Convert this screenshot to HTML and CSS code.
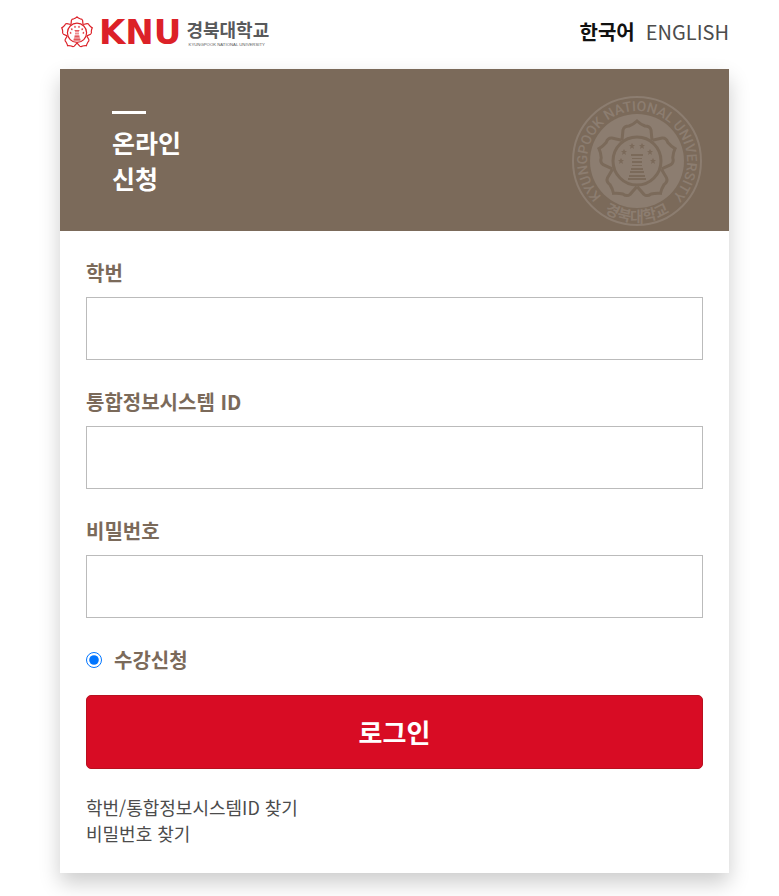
FILE: index.html
```html
<!DOCTYPE html>
<html lang="ko">
<head>
  <meta charset="UTF-8">
  <meta name="viewport" content="width=device-width, initial-scale=1">
  <title>경북대학교 온라인 신청</title>
  <link rel="stylesheet" href="styles.css">
</head>
<body>
  <svg class="defs" width="0" height="0" aria-hidden="true">
    <defs>
      <g id="petals">
        <path id="petal" d="M-15 -21L-14 -31Q-13 -35 -8 -35Q-3 -37 0 -40Q3 -37 8 -35Q13 -35 14 -31L15 -21"/>
        <use href="#petal" transform="rotate(72)"/>
        <use href="#petal" transform="rotate(144)"/>
        <use href="#petal" transform="rotate(216)"/>
        <use href="#petal" transform="rotate(288)"/>
        <circle r="24"/>
      </g>
      <path id="star" d="M0 -3L1 -1H3L1.3 .5L2 3L0 1.5L-2 3L-1.3 .5L-3 -1H-1Z"/>
      <g id="tower">
        <path d="M-6 -7H6V-5H-6ZM-5 -3H5V-2H-5ZM-5 0H5V2H-5ZM-5 4H5V5H-5ZM-6 7H6V9H-6ZM-7 10H7V12H-7ZM-8 14H8V16H-8ZM-9 17H9V19H-9Z"/>
        <use href="#star" x="-16" y="0"/>
        <use href="#star" x="-13" y="-9"/>
        <use href="#star" x="-5" y="-15"/>
        <use href="#star" x="5" y="-15"/>
        <use href="#star" x="13" y="-9"/>
        <use href="#star" x="16" y="0"/>
      </g>
    </defs>
  </svg>

  <div class="wrap">
    <header class="top">
      <a href="#" class="logo">
        <svg class="logo-mark" viewBox="-42 -42 84 80" aria-hidden="true">
          <use href="#petals"/>
          <use href="#tower" class="fill"/>
        </svg>
        <span class="logo-knu">KNU</span>
        <span class="logo-name">
          <span class="logo-ko">경북대학교</span>
          <svg class="logo-en" viewBox="0 0 94 7"><text x="1" y="6">KYUNGPOOK NATIONAL UNIVERSITY</text></svg>
        </span>
      </a>
      <nav class="lang">
        <a href="#" class="on">한국어</a>
        <a href="#">ENGLISH</a>
      </nav>
    </header>

    <main class="card">
      <div class="banner">
        <h1>온라인<br>신청</h1>
        <svg class="emblem" viewBox="-66 -66 132 132" aria-hidden="true">
          <path id="arc-top" class="none" d="M-30 40A50 50 0 1 1 30 40"/>
          <path id="arc-bottom" class="none" d="M-50 34A60 60 0 0 0 50 34"/>
          <circle class="ring" r="64"/>
          <circle class="disc" r="47"/>
          <use href="#petals" class="flower"/>
          <use href="#tower" class="tower"/>
          <text class="seal-en"><textPath href="#arc-top" startOffset="50%">KYUNGPOOK NATIONAL UNIVERSITY</textPath></text>
          <text class="seal-ko"><textPath href="#arc-bottom" startOffset="50%">경북대학교</textPath></text>
        </svg>
      </div>

      <form class="login">
        <label for="student-no">학번</label>
        <input type="text" id="student-no" class="field">

        <label for="user-id">통합정보시스템 ID</label>
        <input type="text" id="user-id" class="field">

        <label for="password">비밀번호</label>
        <input type="password" id="password" class="field">

        <div class="type">
          <input type="radio" id="type-course" name="type" checked>
          <label for="type-course">수강신청</label>
        </div>

        <button type="submit" class="btn">로그인</button>

        <div class="find">
          <a href="#">학번/통합정보시스템ID 찾기</a>
          <a href="#">비밀번호 찾기</a>
        </div>
      </form>
    </main>
  </div>
</body>
</html>
```
FILE: styles.css
```css
* {
  box-sizing: border-box;
}
body {
  margin: 0;
  background: #fff;
  color: #4c4c4c;
  font-family: "Noto Sans CJK KR", sans-serif;
}
a {
  color: inherit;
  text-decoration: none;
}
.defs {
  position: absolute;
}
.wrap {
  padding: 0 50px 24px 60px;
}

/* header */
.top {
  display: flex;
  justify-content: space-between;
  align-items: center;
  height: 69px;
  padding-bottom: 5px;
}
.logo {
  display: flex;
  align-items: center;
}
.logo-mark {
  width: 34px;
  height: 32px;
  fill: none;
  stroke: #dc2128;
  stroke-width: 3;
}
.logo-mark .fill {
  fill: #dc2128;
  stroke: none;
}
.logo-knu {
  margin-left: 5px;
  color: #dc2128;
  font: bold 34px/32px "DejaVu Sans", sans-serif;
}
.logo-name {
  display: flex;
  flex-direction: column;
  margin-left: 5px;
}
.logo-ko {
  color: #58595b;
  font-size: 18px;
  font-weight: 700;
  line-height: 24px;
}
.logo-en {
  width: 84px;
  height: 6px;
  fill: #58595b;
  font: 5px "Liberation Sans", sans-serif;
}
.lang {
  display: flex;
  gap: 11px;
  font-size: 20px;
  line-height: 30px;
}
.lang .on {
  color: #111;
  font-weight: 700;
}

/* login box */
.card {
  background: #fff;
  box-shadow: 0 10px 20px rgba(0, 0, 0, 0.2);
}
.banner {
  display: flex;
  justify-content: space-between;
  align-items: flex-start;
  height: 162px;
  padding: 26px 26px 0 52px;
  background: #7b6a5a;
}
h1 {
  margin: 16px 0 0;
  color: #fff;
  font-size: 25px;
  font-weight: 700;
  line-height: 36px;
}
h1::before {
  content: "";
  display: block;
  width: 34px;
  height: 3px;
  margin-bottom: 10px;
  background: #fff;
}
.emblem {
  width: 132px;
  height: 132px;
  fill: #8c7d70;
}
.emblem .none {
  fill: none;
}
.emblem .ring {
  fill: none;
  stroke: #8c7d70;
  stroke-width: 2;
}
.emblem .flower {
  fill: none;
  stroke: #7b6a5a;
  stroke-width: 3;
}
.emblem .tower {
  fill: #7b6a5a;
}
.seal-en {
  font: 500 14px Roboto, sans-serif;
  text-anchor: middle;
}
.seal-ko {
  font-size: 15px;
  font-weight: 700;
  text-anchor: middle;
}
.login {
  padding: 27px 26px;
}
.login label {
  display: block;
  color: #7b6a5a;
  font-size: 20px;
  font-weight: 700;
  line-height: 30px;
}
.field {
  display: block;
  width: 100%;
  height: 63px;
  margin: 9px 0 27px;
  padding: 0 16px;
  border: 1px solid #bbb;
  background: #fff;
  font: inherit;
  font-size: 20px;
}
.type {
  display: flex;
  align-items: center;
  gap: 12px;
}
.type input {
  width: 16px;
  height: 16px;
  margin: 0;
  accent-color: #0075ff;
}
.btn {
  display: block;
  width: 100%;
  height: 74px;
  margin-top: 20px;
  padding: 0 0 2px;
  border: 1px solid #b9101f;
  border-radius: 5px;
  background: #d80c24;
  color: #fff;
  font-family: inherit;
  font-size: 26px;
  font-weight: 700;
}
.find {
  display: flex;
  flex-direction: column;
  align-items: flex-start;
  margin-top: 25px;
  font-size: 18px;
  line-height: 26px;
}
```
